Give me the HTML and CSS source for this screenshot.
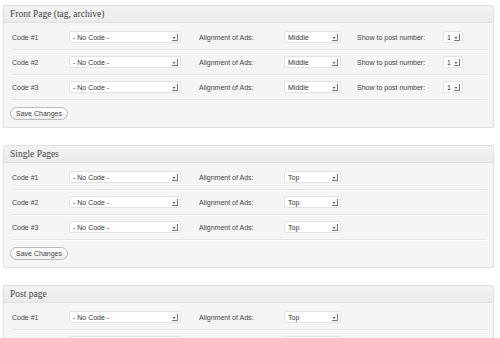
FILE: index.html
```html
<!DOCTYPE html>
<html lang="en">
<head>
<meta charset="UTF-8">
<meta name="viewport" content="width=device-width, initial-scale=1.0">
<title>Ad Settings</title>
<link rel="stylesheet" href="styles.css">
</head>
<body>

<!-- Front page panel -->
<div class="panel">
    <h3 class="panel-title">Front Page (tag, archive)</h3>
    <div class="panel-body">
        <div class="row">
            <span class="label">Code #1</span>
            <span class="select wide">- No Code -<i class="arrow"></i></span>
            <span class="label">Alignment of Ads:</span>
            <span class="select mid">Middle<i class="arrow"></i></span>
            <span class="label">Show to post number:</span>
            <span class="select tiny">1<i class="arrow"></i></span>
        </div>
        <div class="row">
            <span class="label">Code #2</span>
            <span class="select wide">- No Code -<i class="arrow"></i></span>
            <span class="label">Alignment of Ads:</span>
            <span class="select mid">Middle<i class="arrow"></i></span>
            <span class="label">Show to post number:</span>
            <span class="select tiny">1<i class="arrow"></i></span>
        </div>
        <div class="row">
            <span class="label">Code #3</span>
            <span class="select wide">- No Code -<i class="arrow"></i></span>
            <span class="label">Alignment of Ads:</span>
            <span class="select mid">Middle<i class="arrow"></i></span>
            <span class="label">Show to post number:</span>
            <span class="select tiny">1<i class="arrow"></i></span>
        </div>
        <button class="save">Save Changes</button>
    </div>
</div>

<!-- Single pages panel -->
<div class="panel">
    <h3 class="panel-title">Single Pages</h3>
    <div class="panel-body">
        <div class="row">
            <span class="label">Code #1</span>
            <span class="select wide">- No Code -<i class="arrow"></i></span>
            <span class="label">Alignment of Ads:</span>
            <span class="select mid">Top<i class="arrow"></i></span>
        </div>
        <div class="row">
            <span class="label">Code #2</span>
            <span class="select wide">- No Code -<i class="arrow"></i></span>
            <span class="label">Alignment of Ads:</span>
            <span class="select mid">Top<i class="arrow"></i></span>
        </div>
        <div class="row">
            <span class="label">Code #3</span>
            <span class="select wide">- No Code -<i class="arrow"></i></span>
            <span class="label">Alignment of Ads:</span>
            <span class="select mid">Top<i class="arrow"></i></span>
        </div>
        <button class="save">Save Changes</button>
    </div>
</div>

<!-- Post page panel -->
<div class="panel">
    <h3 class="panel-title">Post page</h3>
    <div class="panel-body">
        <div class="row">
            <span class="label">Code #1</span>
            <span class="select wide">- No Code -<i class="arrow"></i></span>
            <span class="label">Alignment of Ads:</span>
            <span class="select mid">Top<i class="arrow"></i></span>
        </div>
        <div class="row">
            <span class="label">Code #2</span>
            <span class="select wide">- No Code -<i class="arrow"></i></span>
            <span class="label">Alignment of Ads:</span>
            <span class="select mid">Top<i class="arrow"></i></span>
        </div>
        <div class="row">
            <span class="label">Code #3</span>
            <span class="select wide">- No Code -<i class="arrow"></i></span>
            <span class="label">Alignment of Ads:</span>
            <span class="select mid">Top<i class="arrow"></i></span>
        </div>
        <button class="save">Save Changes</button>
    </div>
</div>

</body>
</html>
```

FILE: styles.css
```css
body {
    margin: 0;
    background: #fff;
    font-family: "Liberation Sans", Arial, sans-serif;
    font-size: 7px;
    color: #333;
}

.panel {
    width: 491px;
    margin: 5px 0 17px 3px;
    box-sizing: border-box;
    border: 1px solid #dfdfdf;
    border-radius: 2px;
    background: #f5f5f5;
}

.panel-title {
    margin: 0;
    height: 16px;
    line-height: 16px;
    padding-left: 6px;
    font-family: "Liberation Serif", "Times New Roman", serif;
    font-size: 9.5px;
    font-weight: normal;
    color: #464646;
    background: linear-gradient(#f3f3f3, #ebebeb);
    border-bottom: 1px solid #dfdfdf;
}

.panel-body {
    padding: 2px 6px 7px 8px;
}

.row {
    display: grid;
    grid-template-columns: 57px 130px 85px 73px 86px 20px;
    align-items: center;
    height: 24px;
    border-bottom: 1px solid #e4e4e4;
    box-shadow: 0 1px 0 #fff;
}

.label {
    color: #444;
}

.select {
    position: relative;
    height: 12px;
    line-height: 11px;
    box-sizing: border-box;
    padding-left: 3px;
    background: #fff;
    border: 1px solid #e2e2e2;
    border-radius: 2px;
    color: #333;
}

.wide { width: 112px; }
.mid { width: 57px; }
.tiny { width: 20px; }

.arrow {
    position: absolute;
    right: 2px;
    top: 2px;
    width: 5px;
    height: 6px;
    background: #f6f6f6;
    border-right: 1px solid #777;
    border-bottom: 1px solid #777;
}

.arrow::after {
    content: "";
    position: absolute;
    left: 1px;
    top: 3px;
    border-left: 1.5px solid transparent;
    border-right: 1.5px solid transparent;
    border-top: 2px solid #222;
}

.save {
    display: block;
    margin: 7px 0 0 -2px;
    width: 58px;
    height: 13px;
    padding: 0;
    font-family: "Liberation Sans", Arial, sans-serif;
    font-size: 7px;
    color: #444;
    background: linear-gradient(#fff, #f0f0f0);
    border: 1px solid #bbb;
    border-radius: 7px;
}
```
